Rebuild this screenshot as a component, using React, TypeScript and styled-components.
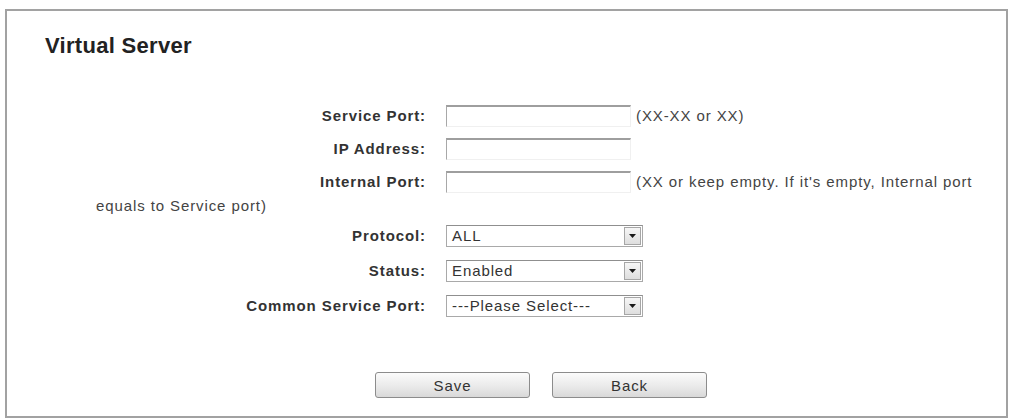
import React from "react";
import styled, { createGlobalStyle } from "styled-components";

const GlobalStyle = createGlobalStyle`
  html, body {
    margin: 0;
    padding: 0;
    background: #ffffff;
  }
  body {
    font-family: "Liberation Sans", Arial, Helvetica, sans-serif;
    color: #3a3a3a;
  }
`;

const Page = styled.div`
  padding: 9px 0 0 5px;
`;

const Frame = styled.div`
  box-sizing: border-box;
  width: 1003px;
  height: 409px;
  border: 2px solid #a2a2a2;
  background: #ffffff;
  padding: 21px 15px 0 38px;
`;

const Title = styled.h1`
  margin: 0;
  font-size: 22px;
  line-height: 27px;
  font-weight: bold;
  letter-spacing: 0.3px;
  color: #222;
`;

const Form = styled.div`
  margin-top: 45px;
  padding-left: 51px;
`;

const FieldRow = styled.div<{ $after: number }>`
  font-size: 15px;
  line-height: 24px;
  letter-spacing: 0.9px;
  color: #444;
  white-space: nowrap;
  margin-bottom: ${(p) => p.$after}px;
`;

const Label = styled.span`
  display: inline-block;
  vertical-align: top;
  width: 330px;
  text-align: right;
  font-weight: bold;
  color: #333;
`;

const TextField = styled.input`
  box-sizing: border-box;
  display: inline-block;
  vertical-align: top;
  width: 185px;
  height: 22px;
  margin: 1px 0 0 20px;
  padding: 0 4px;
  border: 1px solid;
  border-color: #9e9e9e #f0f0f0 #f0f0f0 #a8a8a8;
  border-top-width: 2px;
  background: #fff;
  font: inherit;
  outline: none;
`;

const Hint = styled.span`
  margin-left: 5px;
  color: #444;
`;

/* wrapped remainder of a hint, flowing back to the left edge of the form */
const HintContinued = styled.div`
  color: #444;
`;

const SelectBox = styled.div`
  box-sizing: border-box;
  display: inline-flex;
  vertical-align: top;
  align-items: center;
  width: 197px;
  height: 22px;
  margin: 1px 0 0 20px;
  border: 1px solid #a9a9a9;
  border-top-color: #8f8f8f;
  background: #fff;
`;

const SelectValue = styled.span`
  flex: 1;
  padding-left: 5px;
  line-height: 20px;
  color: #333;
  white-space: nowrap;
`;

const ArrowButton = styled.span`
  box-sizing: border-box;
  display: flex;
  align-items: center;
  justify-content: center;
  width: 17px;
  height: 18px;
  margin-right: 1px;
  border: 1px solid #a6a6a6;
  background: linear-gradient(#f6f6f6, #dedede);
`;

const ButtonBar = styled.div`
  display: flex;
  gap: 22px;
  padding-left: 279px;
`;

const Button = styled.button`
  box-sizing: border-box;
  width: 155px;
  height: 26px;
  border: 1px solid #8c8c8c;
  border-radius: 3px;
  background: linear-gradient(#fbfbfb, #eaeaea 55%, #d9d9d9);
  font-family: inherit;
  font-size: 15px;
  letter-spacing: 0.9px;
  color: #333;
  padding: 0;
  cursor: pointer;
`;

const DownArrow = () => (
  <svg width="7" height="4" viewBox="0 0 7 4">
    <path d="M0 0 H7 L3.5 4 Z" fill="#1a1a1a" />
  </svg>
);

const Select = ({ value }: { value: string }) => (
  <SelectBox>
    <SelectValue>{value}</SelectValue>
    <ArrowButton>
      <DownArrow />
    </ArrowButton>
  </SelectBox>
);

export default function App() {
  return (
    <>
      <GlobalStyle />
      <Page>
        <Frame>
          <Title>Virtual Server</Title>
          <Form>
            <FieldRow $after={9}>
              <Label>Service Port:</Label>
              <TextField type="text" />
              <Hint>(XX-XX or XX)</Hint>
            </FieldRow>
            <FieldRow $after={9}>
              <Label>IP Address:</Label>
              <TextField type="text" />
            </FieldRow>
            <FieldRow $after={6}>
              <Label>Internal Port:</Label>
              <TextField type="text" />
              <Hint>(XX or keep empty. If it's empty, Internal port</Hint>
              <HintContinued>equals to Service port)</HintContinued>
            </FieldRow>
            <FieldRow $after={11}>
              <Label>Protocol:</Label>
              <Select value="ALL" />
            </FieldRow>
            <FieldRow $after={11}>
              <Label>Status:</Label>
              <Select value="Enabled" />
            </FieldRow>
            <FieldRow $after={54}>
              <Label>Common Service Port:</Label>
              <Select value="---Please Select---" />
            </FieldRow>
            <ButtonBar>
              <Button type="button">Save</Button>
              <Button type="button">Back</Button>
            </ButtonBar>
          </Form>
        </Frame>
      </Page>
    </>
  );
}
